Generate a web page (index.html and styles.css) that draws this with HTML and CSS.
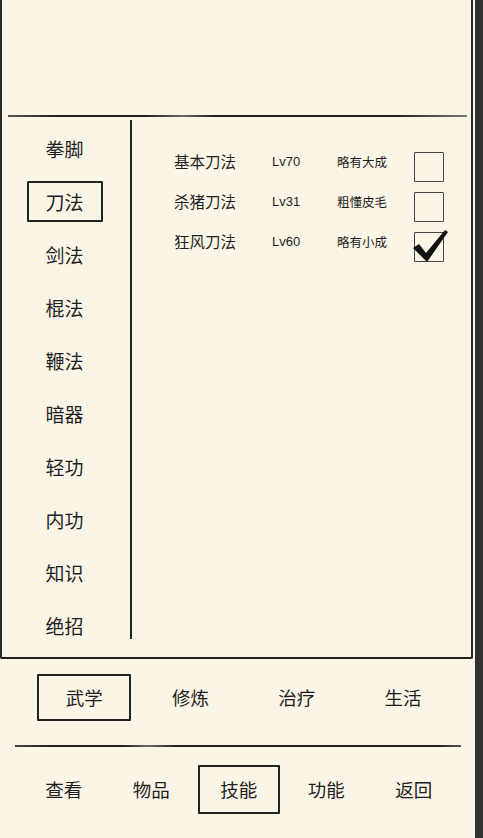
FILE: index.html
```html
<!DOCTYPE html>
<html lang="zh">
<head>
<meta charset="utf-8">
<link rel="stylesheet" href="styles.css">
</head>
<body>
<div class="screen">
  <div class="main">
    <div class="panel">
      <div class="top"></div>
      <div class="hline"></div>
      <div class="body">
        <div class="menu">
          <div class="mi">拳脚</div>
          <div class="mi"><span class="sel">刀法</span></div>
          <div class="mi">剑法</div>
          <div class="mi">棍法</div>
          <div class="mi">鞭法</div>
          <div class="mi">暗器</div>
          <div class="mi">轻功</div>
          <div class="mi">内功</div>
          <div class="mi">知识</div>
          <div class="mi">绝招</div>
        </div>
        <div class="divider"></div>
        <div class="list">
          <div class="row"><span class="name">基本刀法</span><span class="lv">Lv70</span><span class="st">略有大成</span><span class="cb"></span></div>
          <div class="row"><span class="name">杀猪刀法</span><span class="lv">Lv31</span><span class="st">粗懂皮毛</span><span class="cb"></span></div>
          <div class="row"><span class="name">狂风刀法</span><span class="lv">Lv60</span><span class="st">略有小成</span><span class="cb"><svg class="check" viewBox="0 0 38 36" width="38" height="36"><path d="M2 20 L8 16 L15 25 L34 2 L37 4 L16 34 Z" fill="#111"/></svg></span></div>
        </div>
      </div>
    </div>
    <div class="tabs">
      <div class="tab"><span class="box">武学</span></div>
      <div class="tab">修炼</div>
      <div class="tab">治疗</div>
      <div class="tab">生活</div>
    </div>
    <div class="bline"></div>
    <div class="nav">
      <div class="ni">查看</div>
      <div class="ni">物品</div>
      <div class="ni"><span class="nbox">技能</span></div>
      <div class="ni">功能</div>
      <div class="ni">返回</div>
    </div>
  </div>
  <div class="strip"></div>
</div>
</body>
</html>
```
FILE: styles.css
```css
html, body {
  margin: 0;
  padding: 0;
  background: #fbf5e7;
}
body {
  font-family: "Noto Sans CJK SC", "Noto Sans", sans-serif;
  color: #1e1e1e;
}
.screen {
  display: flex;
  width: 483px;
  height: 838px;
  overflow: hidden;
}
.main {
  width: 475px;
  display: flex;
  flex-direction: column;
}
.strip {
  width: 8px;
  background: #323232;
}
.panel {
  width: 469px;
  height: 657px;
  border-left: 2px solid #2a2a2a;
  border-right: 2px solid #2a2a2a;
  border-bottom: 2px solid #222;
  border-radius: 0 0 2px 2px;
  display: flex;
  flex-direction: column;
}
.top {
  height: 115px;
}
.hline {
  height: 2px;
  margin: 0 4px 0 6px;
  background: linear-gradient(90deg, #555 0%, #222 10%, #222 30%, #666 38%, #222 45%, #222 85%, #777 100%);
}
.body {
  display: flex;
  flex: 1;
}
.menu {
  width: 125px;
  padding-right: 3px;
  padding-top: 5px;
  display: flex;
  flex-direction: column;
}
.mi {
  height: 53px;
  display: flex;
  align-items: center;
  justify-content: center;
  font-size: 19px;
}
.sel {
  width: 72px;
  height: 37px;
  border: 2px solid #222;
  border-radius: 1px;
  display: flex;
  align-items: center;
  justify-content: center;
}
.divider {
  width: 2px;
  background: #222;
  margin: 3px 0 18px 0;
}
.list {
  padding-top: 24px;
  display: flex;
  flex-direction: column;
}
.row {
  height: 40px;
  display: flex;
  align-items: center;
  position: relative;
}
.name {
  margin-left: 42px;
  width: 98px;
  font-size: 15.5px;
}
.lv {
  width: 65px;
  font-family: "Liberation Sans", Arial, sans-serif;
  font-size: 13px;
}
.st {
  width: 77px;
  font-size: 12.5px;
}
.cb {
  width: 28px;
  height: 28px;
  border: 1.5px solid #444;
  border-radius: 1px;
  position: relative;
  margin-top: 12px;
}
.check {
  position: absolute;
  left: -4px;
  top: -5px;
}
.tabs {
  height: 76px;
  display: flex;
  padding-left: 31px;
  align-items: center;
}
.tab {
  width: 106.3px;
  display: flex;
  justify-content: center;
  align-items: center;
  font-size: 18.5px;
  height: 47px;
}
.box {
  width: 90px;
  height: 43px;
  border: 2px solid #222;
  display: flex;
  align-items: center;
  justify-content: center;
  border-radius: 1px;
}
.bline {
  height: 2px;
  margin: 10px 14px 0 15px;
  background: linear-gradient(90deg, #444 0%, #222 8%, #222 24%, #666 30%, #222 36%, #222 95%, #555 100%);
}
.nav {
  display: flex;
  padding-left: 20px;
  margin-top: 17px;
  height: 50px;
  align-items: center;
}
.ni {
  width: 87.5px;
  display: flex;
  justify-content: center;
  align-items: center;
  font-size: 18.5px;
  height: 50px;
}
.nbox {
  width: 78px;
  height: 45px;
  border: 2px solid #222;
  display: flex;
  align-items: center;
  justify-content: center;
  border-radius: 1px;
}
```
